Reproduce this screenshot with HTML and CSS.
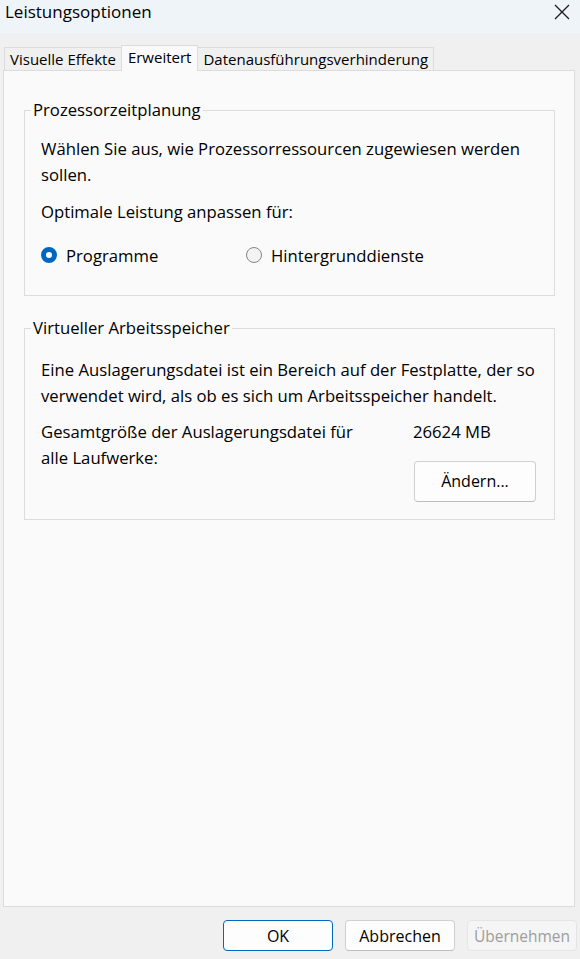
FILE: index.html
```html
<!DOCTYPE html>
<html lang="de">
<head>
    <meta charset="UTF-8">
    <meta name="viewport" content="width=device-width, initial-scale=1.0">
    <title>Leistungsoptionen</title>
    <link rel="stylesheet" href="styles.css">
</head>
<body>
    <!-- Titelleiste -->
    <header class="titlebar">
        <span class="title">Leistungsoptionen</span>
        <button class="close" aria-label="Schließen">
            <svg width="16" height="16" viewBox="0 0 16 16"><path d="M1 1 L15 15 M15 1 L1 15" stroke="#1a1a1a" stroke-width="1.3" fill="none"/></svg>
        </button>
    </header>

    <!-- Registerkarten -->
    <nav class="tabs">
        <div class="tab">Visuelle Effekte</div>
        <div class="tab selected">Erweitert</div>
        <div class="tab">Datenausführungsverhinderung</div>
    </nav>

    <main class="panel">
        <fieldset class="group group-cpu">
            <legend>Prozessorzeitplanung</legend>
            <p class="text first">Wählen Sie aus, wie Prozessorressourcen zugewiesen werden sollen.</p>
            <p class="text second">Optimale Leistung anpassen für:</p>
            <div class="radios">
                <label class="radio"><span class="dot checked"></span>Programme</label>
                <label class="radio"><span class="dot"></span>Hintergrunddienste</label>
            </div>
        </fieldset>

        <fieldset class="group group-mem">
            <legend>Virtueller Arbeitsspeicher</legend>
            <p class="text first">Eine Auslagerungsdatei ist ein Bereich auf der Festplatte, der so verwendet wird, als ob es sich um Arbeitsspeicher handelt.</p>
            <div class="pagefile">
                <div class="pf-label">Gesamtgröße der Auslagerungsdatei für alle Laufwerke:</div>
                <div class="pf-side">
                    <div class="pf-value">26624 MB</div>
                    <button class="btn change">Ändern...</button>
                </div>
            </div>
        </fieldset>
    </main>

    <!-- Dialogschaltflächen -->
    <footer class="footer">
        <button class="btn default">OK</button>
        <button class="btn">Abbrechen</button>
        <button class="btn disabled">Übernehmen</button>
    </footer>
</body>
</html>
```

FILE: styles.css
```css
:root {
    --text: #000;
    --border: #dcdcdc;
    --panel: #fafafa;
    --accent: #0067c0;
}

* {
    box-sizing: border-box;
}

body {
    margin: 0;
    width: 580px;
    height: 959px;
    background: #f0f0f0;
    font-family: "Open Sans", "Noto Sans", sans-serif;
    font-size: 16.7px;
    color: var(--text);
    display: flex;
    flex-direction: column;
    overflow: hidden;
}

/* Titelleiste */
.titlebar {
    height: 33px;
    background: #eff4f9;
    display: flex;
    justify-content: space-between;
    align-items: flex-start;
    padding: 1px 0 0 5px;
}

.title {
    line-height: 22px;
    font-size: 17px;
}

.close {
    border: none;
    background: none;
    padding: 0;
    margin: 3px 10px 0 0;
    width: 16px;
    height: 16px;
    display: flex;
}

/* Registerkarten */
.tabs {
    display: flex;
    align-items: flex-end;
    margin-top: 12px;
    padding-left: 4px;
    height: 25px;
    position: relative;
    z-index: 1;
    font-size: 15px;
}

.tab {
    height: 23px;
    line-height: 22px;
    padding: 0 5px;
    border: 1px solid var(--border);
    border-bottom: none;
    background: #f0f0f0;
    white-space: nowrap;
}

.tab.selected {
    height: 26px;
    margin-bottom: -1px;
    padding: 0 6px 2px;
    background: var(--panel);
    margin-left: -1px;
    margin-right: -1px;
}

/* Hauptbereich */
.panel {
    margin: 0 5px 0 3px;
    height: 837px;
    background: var(--panel);
    border: 1px solid var(--border);
    padding: 0 19px 0 20px;
    display: flex;
    flex-direction: column;
}

.group {
    margin: 0;
    border: 1px solid var(--border);
    padding: 0 16px;
    min-width: 0;
}

.group legend {
    padding: 0 2px;
    margin-left: -10px;
    line-height: 22px;
}

.group-cpu {
    margin-top: 28px;
    padding-bottom: 27px;
}

.group-mem {
    margin-top: 21px;
    padding-bottom: 17px;
}

.text {
    margin: 0;
    line-height: 25.5px;
}

.group-cpu .first {
    margin-top: 15px;
}

.group-mem .first {
    margin-top: 18px;
}

.second {
    margin-top: 12px;
}

/* Optionsfelder */
.radios {
    display: grid;
    grid-template-columns: 205px auto;
    margin-top: 18px;
    line-height: 25.5px;
}

.radio {
    display: flex;
    align-items: center;
    gap: 9px;
}

.dot {
    width: 16px;
    height: 16px;
    border-radius: 50%;
    border: 1px solid #858585;
    background: #f3f3f3;
    flex: none;
}

.dot.checked {
    border: 5px solid var(--accent);
    background: #fff;
}

/* Auslagerungsdatei */
.pagefile {
    display: grid;
    grid-template-columns: 1fr 122px;
    column-gap: 44px;
    margin-top: 11px;
    padding-right: 2px;
    line-height: 25.5px;
}

.pf-side {
    display: flex;
    flex-direction: column;
    align-items: flex-start;
}

.pf-value {
    margin-left: -1px;
}

/* Schaltflächen */
.btn {
    font-family: inherit;
    font-size: 16px;
    color: var(--text);
    background: #fdfdfd;
    border: 1px solid #d0d0d0;
    border-bottom-color: #bdbdbd;
    border-radius: 4px;
    padding: 0;
}

.change {
    width: 122px;
    height: 41px;
    margin-top: 16px;
}

.footer {
    display: flex;
    justify-content: flex-end;
    gap: 12px;
    padding: 13px 3px 0 0;
}

.footer .btn {
    width: 110px;
    height: 31px;
}

.btn.default {
    border: 1px solid var(--accent);
}

.btn.disabled {
    background: #f5f5f5;
    border-color: #e5e5e5;
    color: #9d9d9d;
    font-size: 15.5px;
}
```
